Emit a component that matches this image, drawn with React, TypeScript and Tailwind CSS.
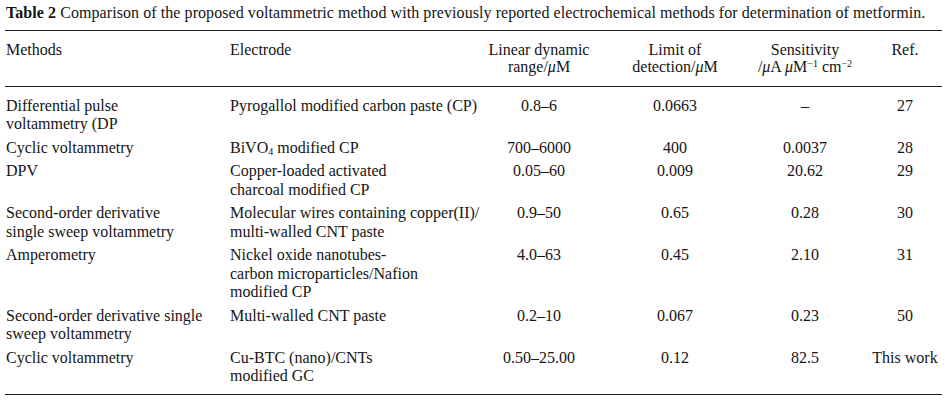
import React from "react";

type Row = {
  method: React.ReactNode;
  electrode: React.ReactNode;
  range: string;
  lod: string;
  sens: string;
  ref: string;
};

const rows: Row[] = [
  {
    method: (
      <>
        Differential pulse
        <br />
        voltammetry (DP
      </>
    ),
    electrode: "Pyrogallol modified carbon paste (CP)",
    range: "0.8–6",
    lod: "0.0663",
    sens: "–",
    ref: "27",
  },
  {
    method: "Cyclic voltammetry",
    electrode: (
      <>
        BiVO<sub className="text-[10px] leading-none">4</sub> modified CP
      </>
    ),
    range: "700–6000",
    lod: "400",
    sens: "0.0037",
    ref: "28",
  },
  {
    method: "DPV",
    electrode: (
      <>
        Copper-loaded activated
        <br />
        charcoal modified CP
      </>
    ),
    range: "0.05–60",
    lod: "0.009",
    sens: "20.62",
    ref: "29",
  },
  {
    method: (
      <>
        Second-order derivative
        <br />
        single sweep voltammetry
      </>
    ),
    electrode: (
      <>
        Molecular wires containing copper(II)/
        <br />
        multi-walled CNT paste
      </>
    ),
    range: "0.9–50",
    lod: "0.65",
    sens: "0.28",
    ref: "30",
  },
  {
    method: "Amperometry",
    electrode: (
      <>
        Nickel oxide nanotubes-
        <br />
        carbon microparticles/Nafion
        <br />
        modified CP
      </>
    ),
    range: "4.0–63",
    lod: "0.45",
    sens: "2.10",
    ref: "31",
  },
  {
    method: (
      <>
        Second-order derivative single
        <br />
        sweep voltammetry
      </>
    ),
    electrode: "Multi-walled CNT paste",
    range: "0.2–10",
    lod: "0.067",
    sens: "0.23",
    ref: "50",
  },
  {
    method: "Cyclic voltammetry",
    electrode: (
      <>
        Cu-BTC (nano)/CNTs
        <br />
        modified GC
      </>
    ),
    range: "0.50–25.00",
    lod: "0.12",
    sens: "82.5",
    ref: "This work",
  },
];

const cols = "grid grid-cols-[225px_250px_118px_154px_106px_84px]";

const App = () => {
  return (
    <div
      className="w-[945px] h-[402px] bg-white pl-[5px] text-[#151515] text-[16px] leading-[18.5px] whitespace-nowrap"
      style={{ fontFamily: '"Liberation Serif", "Times New Roman", serif' }}
    >
      {/* Caption */}
      <p className="pt-[4px] pl-[1px] mb-[7px] tracking-[0.07px]">
        <span className="font-bold">Table 2</span> Comparison of the proposed
        voltammetric method with previously reported electrochemical methods
        for determination of metformin.
      </p>

      <div className="w-[937px] border-t border-b-[1.5px] border-[#1a1a1a]">
        {/* Header */}
        <div className={`${cols} pt-[10px] pb-[11px] border-b border-[#1a1a1a] leading-[17px]`}>
          <div className="pl-[1px]">Methods</div>
          <div>Electrode</div>
          <div className="text-center">
            Linear dynamic
            <br />
            range/<i>μ</i>M
          </div>
          <div className="text-center">
            Limit of
            <br />
            detection/<i>μ</i>M
          </div>
          <div className="text-center">
            Sensitivity
            <br />
            /<i>μ</i>A <i>μ</i>M
            <sup className="text-[10px] leading-none">−1</sup> cm
            <sup className="text-[10px] leading-none">−2</sup>
          </div>
          <div className="text-center pl-[10px]">Ref.</div>
        </div>

        {/* Body */}
        <div className="pt-[5px] pb-[8px]">
          {rows.map((r, i) => (
            <div key={i} className={`${cols} pt-[5px]`}>
              <div className="pl-[1px]">{r.method}</div>
              <div>{r.electrode}</div>
              <div className="text-center">{r.range}</div>
              <div className="text-center">{r.lod}</div>
              <div className="text-center">{r.sens}</div>
              <div className="text-center pl-[10px]">{r.ref}</div>
            </div>
          ))}
        </div>
      </div>
    </div>
  );
};

export default App;
